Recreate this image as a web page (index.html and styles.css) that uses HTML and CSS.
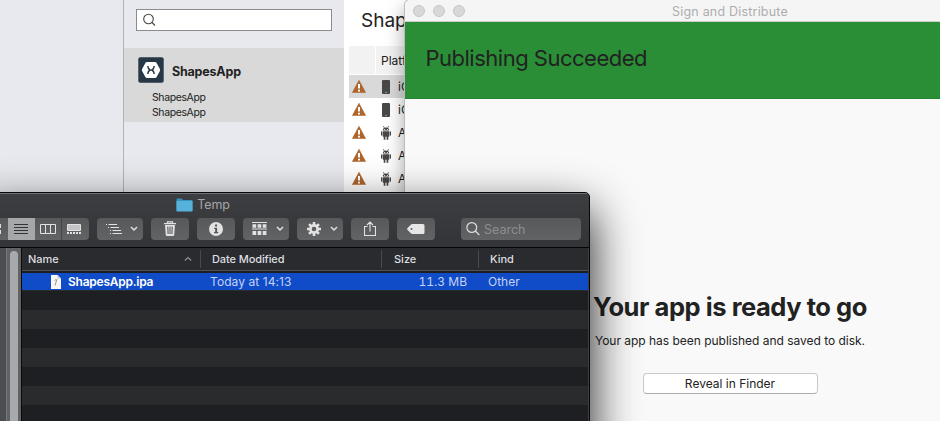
FILE: index.html
```html
<!DOCTYPE html>
<html lang="en">
<head>
<meta charset="utf-8">
<title>Sign and Distribute</title>
<link rel="stylesheet" href="styles.css">
</head>
<body>
<svg class="defs" width="0" height="0" aria-hidden="true">
  <symbol id="warn" viewBox="0 0 14 13"><path d="M7 .3 13.6 12.6H.4Z" fill="#ad652b" stroke="#ad652b" stroke-width=".6" stroke-linejoin="round"/><path d="M6 4h2v4.6H6zM6 9.7h2v1.8H6z" fill="#fff"/></symbol>
  <symbol id="phone" viewBox="0 0 10 14"><rect x="1" width="8" height="14" rx="1" fill="#484848"/><path d="M4 12.4h2" stroke="#aaa" stroke-width=".8"/></symbol>
  <symbol id="android" viewBox="0 0 10 14"><g fill="#484848"><path d="M1.800 4.600a3.200 3.200 0 0 1 6.400 0zM1.800 5.300h6.400v5.400H7.300V13.800H5.600v-3.100H4.400V13.800H2.700v-3.100H1.800z"/><rect y="5.200" width="1.400" height="4.600" rx=".7"/><rect x="8.600" y="5.200" width="1.400" height="4.600" rx=".7"/></g><path d="m2.300 0 1.200 2.200M7.700 0 6.500 2.200" stroke="#484848" stroke-width=".7"/><path d="M3.200 3.100h.9v.8h-.9zM5.900 3.100h.9v.8h-.9z" fill="#fff"/></symbol>
  <symbol id="chev" viewBox="0 0 8 6"><path d="m1 1 3 3 3-3" fill="none" stroke="#e2e2e3" stroke-width="1.5"/></symbol>
</svg>

<main class="desktop">
  <section class="ide">
    <div class="gutter"></div>
    <aside class="archive">
      <div class="find"><svg width="14" height="14" viewBox="0 0 14 14" fill="none" stroke="#444" stroke-width="1.1"><circle cx="5.500" cy="6" r="4.800"/><path d="m9 9.500 3 3"/></svg></div>
      <div class="project">
        <div class="project-head">
          <svg width="26" height="26" viewBox="0 0 26 26"><rect x=".3" y=".3" width="25.4" height="25.4" rx="2" fill="#263746"/><path d="M9 5h8q1 0 1.5.8l3.4 6.200q.5 1 0 2l-3.400 6.200q-.5.8-1.500.8H9q-1 0-1.500-.8L4.100 14q-.5-1 0-2l3.400-6.200Q8 5 9 5Z" fill="#fff"/><path d="M9.800 9q.2 2.800 2.200 4-2 1.200-2.200 4M16.200 9q-.2 2.800-2.200 4 2 1.200 2.200 4" fill="none" stroke="#263746" stroke-width="1.500"/></svg>
          <b>ShapesApp</b>
        </div>
        <p>ShapesApp</p>
        <p>ShapesApp</p>
      </div>
    </aside>
    <div class="details">
      <h2>ShapesApp</h2>
      <div class="thead"><span></span><span>Platform</span></div>
      <div class="trow on"><svg class="w"><use href="#warn"/></svg><svg class="d"><use href="#phone"/></svg>iOS</div>
      <div class="trow"><svg class="w"><use href="#warn"/></svg><svg class="d"><use href="#phone"/></svg>iOS</div>
      <div class="trow"><svg class="w"><use href="#warn"/></svg><svg class="d"><use href="#android"/></svg>And</div>
      <div class="trow"><svg class="w"><use href="#warn"/></svg><svg class="d"><use href="#android"/></svg>And</div>
      <div class="trow"><svg class="w"><use href="#warn"/></svg><svg class="d"><use href="#android"/></svg>And</div>
    </div>
  </section>

  <section class="dialog">
    <header class="dialog-bar"><div class="lights"><i></i><i></i><i></i></div><span>Sign and Distribute</span></header>
    <div class="banner">Publishing Succeeded</div>
    <div class="done">
      <h1>Your app is ready to go</h1>
      <p>Your app has been published and saved to disk.</p>
      <button>Reveal in Finder</button>
    </div>
  </section>

  <section class="finder">
    <header class="top">
      <div class="title"><svg width="17" height="14" viewBox="0 0 17 14"><path d="M.5 1.500q0-1 1-1h4l1.500 1.500h8.500q1 0 1 1V13H.5Z" fill="#3594bd"/><path d="M.5 3h16v9.500q0 1-1 1h-14q-1 0-1-1Z" fill="#56b2da"/></svg>Temp</div>
      <div class="tools">
        <div class="views">
          <span class="v1"><svg width="8" height="22"><path d="M-2 6h3v4h-3zM-2 12h3v4h-3z" fill="#ddd"/></svg></span>
          <span class="v2"><svg width="27" height="22"><path d="M6 6.500h14M6 9.500h14M6 12.500h14M6 15.500h14" stroke="#333437"/></svg></span>
          <span class="v3"><svg width="26" height="22"><path d="M5.500 6.500h15v9h-15zM10.500 6.500v9M15.500 6.500v9" fill="none" stroke="#e2e2e3"/></svg></span>
          <span class="v4"><svg width="27" height="22"><path d="M5.500 6.500h13v6h-13z" fill="#c4c4c6" stroke="#e2e2e3"/><path d="M5 15h14" stroke="#e2e2e3" stroke-width="2" stroke-dasharray="2 1"/></svg></span>
        </div>
        <div class="btn wide lines"><svg width="18" height="14" viewBox="0 0 18 14"><path d="M1 2.500h1M3.500 2.500H12M3 5.500h1M5.500 5.500H14M5 8.500h1M7.500 8.500H16M5 11.500h1M7.500 11.500H17" stroke="#e2e2e3"/></svg><svg width="8" height="6"><use href="#chev"/></svg></div>
        <div class="btn"><svg width="14" height="16" viewBox="0 0 14 16"><path d="M4.500 2V.8h5V2M1 2.700h12" fill="none" stroke="#e2e2e3" stroke-width="1.200"/><path d="M2 4h10l-.8 10q-.1 1-1.100 1H3.900q-1 0-1.100-1Z" fill="#e2e2e3"/><path d="M4.800 5.500 5.100 13M7 5.500V13M9.200 5.500 8.900 13" stroke="#58585a" stroke-width="1.100"/></svg></div>
        <div class="btn"><svg width="14" height="14" viewBox="0 0 14 14"><circle cx="7" cy="7" r="7" fill="#e2e2e3"/><path d="M6.100 2.500h2v2h-2zM5.200 5.700h2.900v4.400h1.100v1.200H5v-1.200h1.200V6.900h-1z" fill="#555557"/></svg></div>
        <div class="btn wide"><svg width="15" height="14" viewBox="0 0 15 14"><path d="M0 .5h15M0 7h15" stroke="#e2e2e3"/><path d="M.5 2.200h3.700v3.600H.5zM5.600 2.200h3.700v3.600H5.600zM10.700 2.200h3.700v3.600h-3.700zM.5 9h3.700v4H.5zM5.600 9h3.700v4H5.600zM10.700 9h3.700v4h-3.700z" fill="#e2e2e3"/></svg><svg width="8" height="6"><use href="#chev"/></svg></div>
        <div class="btn wide"><svg width="14" height="14" viewBox="-7 -7 14 14"><circle r="3.600" fill="none" stroke="#e2e2e3" stroke-width="2.600"/><path d="M-1.300-7h2.600v3h-2.600zM-1.300 4h2.600v3h-2.600zM-7-1.300h3v2.600h-3zM4-1.300h3v2.600H4z" fill="#e2e2e3"/><path transform="rotate(45)" d="M-1.300-7h2.600v3h-2.600zM-1.300 4h2.600v3h-2.600zM-7-1.300h3v2.600h-3zM4-1.300h3v2.600H4z" fill="#e2e2e3"/></svg><svg width="8" height="6"><use href="#chev"/></svg></div>
        <div class="btn"><svg width="12" height="16" viewBox="0 0 12 16"><path d="M3.500 5.500h-3v9h11v-9h-3M6 10.500V1M3 4l3-3 3 3" fill="none" stroke="#e2e2e3" stroke-width="1.100"/></svg></div>
        <div class="btn"><svg width="18" height="10" viewBox="0 0 18 10"><path fill-rule="evenodd" d="m.4 4.300 3.400-3.600Q4.500 0 5.500 0H16q1.500 0 1.500 1.500v7Q17.500 10 16 10H5.500q-1 0-1.700-.7L.4 5.700q-.6-.7 0-1.400ZM4.500 4a1 1 0 1 0 0 2 1 1 0 0 0 0-2Z" fill="#e6e6e7"/></svg></div>
        <div class="search"><svg width="14" height="14" viewBox="0 0 14 14" fill="none" stroke="#dedee0" stroke-width="1.200"><circle cx="5.800" cy="5.500" r="4.900"/><path d="m9.300 9 4 4"/></svg>Search</div>
      </div>
    </header>
    <div class="browser">
      <div class="side"><div class="track"><div class="thumb"></div></div></div>
      <div class="list">
        <div class="cols head"><span>Name<svg width="8" height="6" viewBox="0 0 8 6"><path d="m.8 4.500 3.200-3 3.200 3" fill="none" stroke="#909194" stroke-width="1.100"/></svg></span><span>Date Modified</span><span>Size</span><span>Kind</span></div>
        <div class="cols file"><span><svg width="10" height="14" viewBox="0 0 10 14"><path d="M0 0h6.500L10 3.500V14H0Z" fill="#f7f7f7"/><path d="M6.500 0v3.500H10" fill="#ccc"/><path d="m4 10.500 2-6.500M3.500 5.500l1.500-1" stroke="#888" stroke-width=".9"/></svg><b>ShapesApp.ipa</b></span><span>Today at 14:13</span><span>11.3 MB</span><span>Other</span></div>
        <div class="stripes"></div>
      </div>
    </div>
  </section>
</main>
</body>
</html>
```

FILE: styles.css
```css
* { box-sizing: border-box; }
body { margin: 0; font-family: Inter, "Liberation Sans", sans-serif; color: #222; }
h1, h2, p { margin: 0; }
svg { display: block; flex: none; }
.defs { position: absolute; }
.desktop { position: relative; width: 940px; height: 421px; overflow: hidden; background: #fff; }

/* Archive window */
.ide { display: flex; height: 421px; }
.gutter { width: 124px; background: #e8e9ee; border-right: 1px solid #b3b3b6; }
.archive { width: 220px; background: #e8e9ee; padding-top: 9px; }
.find { width: 196px; height: 22px; margin-left: 12px; padding: 3px 0 0 6px; border: 1px solid #8b8b8d; background: #fff; }
.project { height: 74px; margin-top: 17px; padding: 9px 0 0 14px; background: #d9d9d9; }
.project-head { display: flex; align-items: center; gap: 8px; height: 26px; margin-bottom: 7px; }
.project-head b { font-size: 12.5px; line-height: 16px; padding-top: 3px; letter-spacing: -.2px; }
.project p { padding-left: 14px; font-size: 10.5px; line-height: 15px; letter-spacing: -.4px; }
.details { flex: 1; padding-left: 5px; overflow: hidden; }
.details h2 { height: 46px; padding: 8px 0 0 12px; font-size: 19px; font-weight: 400; line-height: 25px; letter-spacing: 0; }
.thead { display: flex; gap: 1px; height: 29px; font-size: 12px; line-height: 29px; }
.thead span { height: 28px; background: #f2f2f2; }
.thead span:first-child { width: 26px; }
.thead span:last-child { flex: 1; padding-left: 5px; }
.trow { display: flex; align-items: center; height: 23px; padding-left: 3px; font-size: 12px; }
.trow.on { background: #d9d9d9; }
.w { width: 14px; height: 13px; }
.d { width: 10px; height: 14px; margin: 0 7px 0 15px; }

/* Publishing dialog */
.dialog { position: absolute; left: 405px; top: 0; width: 650px; height: 460px; border-radius: 5px 0 0 0; background: #f9f9f9; box-shadow: 0 0 0 1px #bbb, -2px 8px 18px rgba(0,0,0,.32); overflow: hidden; }
.dialog-bar { display: flex; justify-content: center; position: relative; height: 22px; background: #f5f5f5; border-bottom: 1px solid #cdcdcd; font-size: 12.5px; line-height: 23px; letter-spacing: .2px; color: #adadad; }
.lights { position: absolute; left: 8px; top: 5px; display: flex; gap: 8px; }
.lights i { width: 12px; height: 12px; border: 1px solid #c6c6c6; border-radius: 50%; background: #d8d8d8; }
.banner { height: 77px; padding: 21px 0 0 20.5px; background: #2a8e36; border-bottom: 1px solid #238130; font-size: 22px; line-height: 30px; letter-spacing: -.5px; color: #222; }
.done { display: flex; flex-direction: column; align-items: center; padding-top: 192px; }
.done h1 { font-size: 25.5px; line-height: 32px; font-weight: 700; letter-spacing: -.45px; white-space: nowrap; }
.done p { margin-top: 10px; font-size: 12px; line-height: 16px; letter-spacing: -.02px; }
.done button { width: 175px; height: 21px; margin-top: 24px; padding: 0; border: 1px solid #c8c8c8; border-bottom-color: #adadad; border-radius: 4px; background: #fff; font: 12px/18px Inter, sans-serif; color: #222; }

/* Finder */
.finder { position: absolute; left: -20px; top: 192px; width: 610px; height: 320px; border: 1px solid #08080a; border-radius: 5px; background: #1d1e21; box-shadow: 0 20px 46px 2px rgba(0,0,0,.85); overflow: hidden; }
.top { height: 55px; border-top: 1px solid #707174; border-bottom: 1px solid #050505; background: linear-gradient(#3d3e41, #333437); }
.title { display: flex; justify-content: center; gap: 4px; height: 24px; padding: 4px 0 0 3px; margin-left: -167px; font-size: 12.5px; line-height: 14px; letter-spacing: -.1px; color: #a5a6a8; }
.tools { display: flex; gap: 8px; padding-left: 19px; }
.views, .btn, .search { display: flex; align-items: center; height: 22px; border-radius: 4px; background: linear-gradient(#57585a, #626365); }
.views { width: 89px; border-radius: 0 4px 4px 0; overflow: hidden; }
.views .v2 { background: #a6a7a9; }
.views .v4 { border-left: 1px solid #434447; }
.btn { width: 38px; justify-content: center; }
.btn.wide { width: 46px; justify-content: flex-end; gap: 9px; padding-right: 5px; }
.btn.lines { gap: 7px; }
.search { width: 120px; margin-left: 18px; padding-left: 5px; gap: 4px; font-size: 12.5px; color: #8d8e90; }
.browser { display: flex; height: 265px; }
.side { width: 41px; padding-left: 25px; background: #4b4e50; border-right: 1px solid #09090a; }
.track { height: 265px; padding: 3px 3px 0; background: #606264; border-left: 1px solid #77787b; }
.thumb { width: 8px; height: 240px; border-radius: 4px; background: #a8a9ad; }
.list { flex: 1; border-right: 1px solid #3c3d40; }
.cols { display: grid; grid-template-columns: 178px 181px 97px 1fr; white-space: nowrap; }
.head { height: 23px; border-bottom: 1px solid #505154; background: #292b2f; align-items: center; font-size: 11px; font-weight: 500; color: #dedfe0; }
.head span { height: 18px; line-height: 18px; padding-left: 11px; border-left: 1px solid #48494d; }
.head span:nth-child(2) { letter-spacing: -.1px; }
.head span:nth-child(3) { padding-left: 12px; }
.head span:first-child { display: flex; justify-content: space-between; align-items: center; padding: 0 8px 0 6px; border: 0; }
.file { height: 17px; margin-top: 2px; background: #104bc8; font-size: 12px; line-height: 17px; color: #c5d2f3; }
.file span { padding-left: 10px; }
.file span:first-child { display: flex; gap: 7px; align-items: center; padding-left: 29px; color: #fff; }
.file b { font-weight: 600; letter-spacing: -.25px; }
.file span:nth-child(2) { letter-spacing: .08px; }
.file span:nth-child(3) { text-align: right; padding-right: 11px; font-variant-numeric: tabular-nums; }
.stripes { height: 223px; border-top: 1px solid #2a2b2d; background: repeating-linear-gradient(#1e1f22 0 19px, #292b2c 19px 38px); }
```
